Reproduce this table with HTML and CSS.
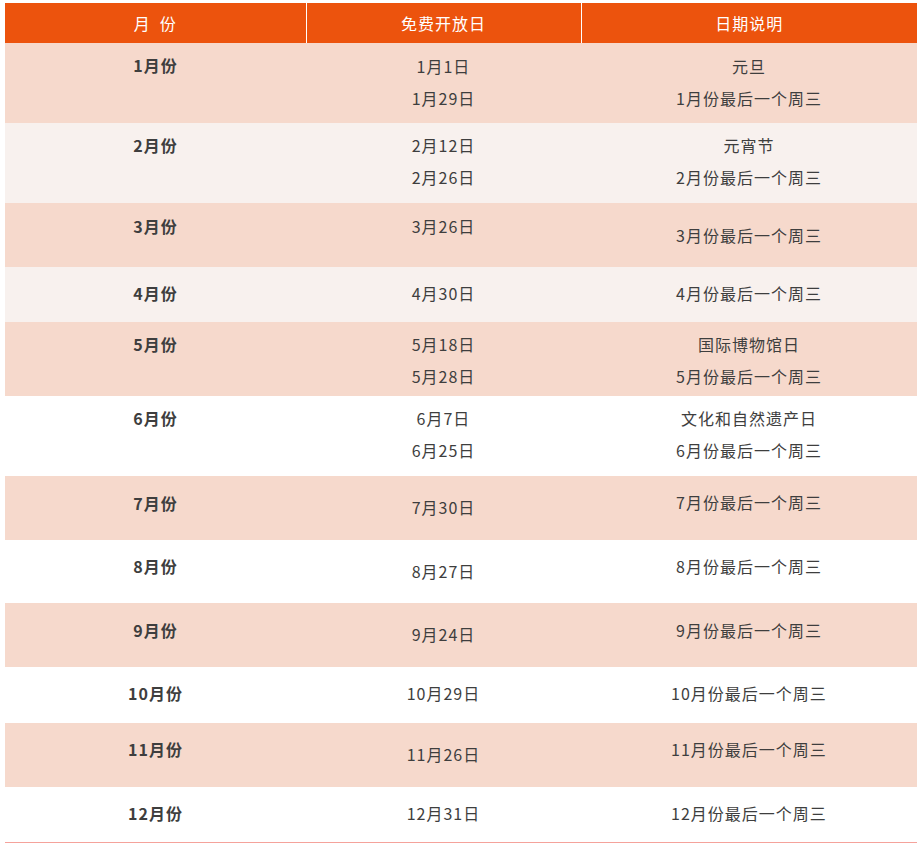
FILE: index.html
```html
<!DOCTYPE html>
<html lang="zh-CN">
<head>
<meta charset="utf-8">
<title>免费开放日</title>
<link rel="stylesheet" href="styles.css">
</head>
<body>
<div class="wrap">
<table class="schedule">
  <colgroup>
    <col class="c1"><col class="c2"><col class="c3">
  </colgroup>
  <thead>
    <tr>
      <th>月&nbsp;&nbsp;份</th>
      <th class="div">免费开放日</th>
      <th class="div">日期说明</th>
    </tr>
  </thead>
  <tbody>
    <tr class="peach h80">
      <td class="m pt6"><p>1月份</p></td>
      <td class="pt7"><p>1月1日</p><p>1月29日</p></td>
      <td class="pt7"><p>元旦</p><p>1月份最后一个周三</p></td>
    </tr>
    <tr class="light h80">
      <td class="m pt6"><p>2月份</p></td>
      <td class="pt6"><p>2月12日</p><p>2月26日</p></td>
      <td class="pt6"><p>元宵节</p><p>2月份最后一个周三</p></td>
    </tr>
    <tr class="peach h64">
      <td class="m pt7"><p>3月份</p></td>
      <td class="pt7"><p>3月26日</p></td>
      <td class="pt16"><p>3月份最后一个周三</p></td>
    </tr>
    <tr class="light h55">
      <td class="m pt10"><p>4月份</p></td>
      <td class="pt10"><p>4月30日</p></td>
      <td class="pt10"><p>4月份最后一个周三</p></td>
    </tr>
    <tr class="peach h74">
      <td class="m pt6"><p>5月份</p></td>
      <td class="pt6"><p>5月18日</p><p>5月28日</p></td>
      <td class="pt6"><p>国际博物馆日</p><p>5月份最后一个周三</p></td>
    </tr>
    <tr class="white h80">
      <td class="m pt6"><p>6月份</p></td>
      <td class="pt6"><p>6月7日</p><p>6月25日</p></td>
      <td class="pt6"><p>文化和自然遗产日</p><p>6月份最后一个周三</p></td>
    </tr>
    <tr class="peach h64">
      <td class="m pt11"><p>7月份</p></td>
      <td class="pt15"><p>7月30日</p></td>
      <td class="pt10"><p>7月份最后一个周三</p></td>
    </tr>
    <tr class="white h63">
      <td class="m pt10"><p>8月份</p></td>
      <td class="pt15"><p>8月27日</p></td>
      <td class="pt10"><p>8月份最后一个周三</p></td>
    </tr>
    <tr class="peach h64">
      <td class="m pt11"><p>9月份</p></td>
      <td class="pt15"><p>9月24日</p></td>
      <td class="pt11"><p>9月份最后一个周三</p></td>
    </tr>
    <tr class="white h56">
      <td class="m pt10"><p>10月份</p></td>
      <td class="pt10"><p>10月29日</p></td>
      <td class="pt10"><p>10月份最后一个周三</p></td>
    </tr>
    <tr class="peach h64">
      <td class="m pt10"><p>11月份</p></td>
      <td class="pt15"><p>11月26日</p></td>
      <td class="pt10"><p>11月份最后一个周三</p></td>
    </tr>
    <tr class="white h55 last">
      <td class="m pt10"><p>12月份</p></td>
      <td class="pt10"><p>12月31日</p></td>
      <td class="pt10"><p>12月份最后一个周三</p></td>
    </tr>
  </tbody>
</table>
</div>
</body>
</html>
```

FILE: styles.css
```css
html, body {
  margin: 0;
  padding: 0;
  background: #ffffff;
}

.wrap {
  padding: 3px 0 0 5px;
}

.schedule {
  width: 912px;
  table-layout: fixed;
  border-collapse: collapse;
  border-spacing: 0;
  font-family: "Noto Sans CJK SC", "Noto Sans", sans-serif;
  font-size: 16px;
  letter-spacing: 1px;
  color: #3e3e3e;
}

.c1 { width: 301px; }
.c2 { width: 275px; }
.c3 { width: 336px; }

.schedule th {
  background: #ec530d;
  color: #ffffff;
  font-weight: normal;
  height: 40px;
  line-height: 39px;
  padding: 0;
  text-align: center;
}

.schedule th.div {
  border-left: 1px solid #ffffff;
}

.schedule td {
  padding: 0;
  vertical-align: top;
  text-align: center;
}

.schedule td p {
  margin: 0;
  line-height: 32px;
}

.schedule td.m {
  font-weight: bold;
}

.peach td { background: #f6d9cc; }
.light td { background: #f8f1ee; }
.white td { background: #ffffff; }

.last td { border-bottom: 1px solid #f5a29b; }

.h80 { height: 80px; }
.h74 { height: 74px; }
.h64 { height: 64px; }
.h63 { height: 63px; }
.h56 { height: 56px; }
.h55 { height: 55px; }

.schedule td.pt6 { padding-top: 6px; }
.schedule td.pt7 { padding-top: 7px; }
.schedule td.pt10 { padding-top: 10px; }
.schedule td.pt11 { padding-top: 11px; }
.schedule td.pt15 { padding-top: 15px; }
.schedule td.pt16 { padding-top: 16px; }
```
